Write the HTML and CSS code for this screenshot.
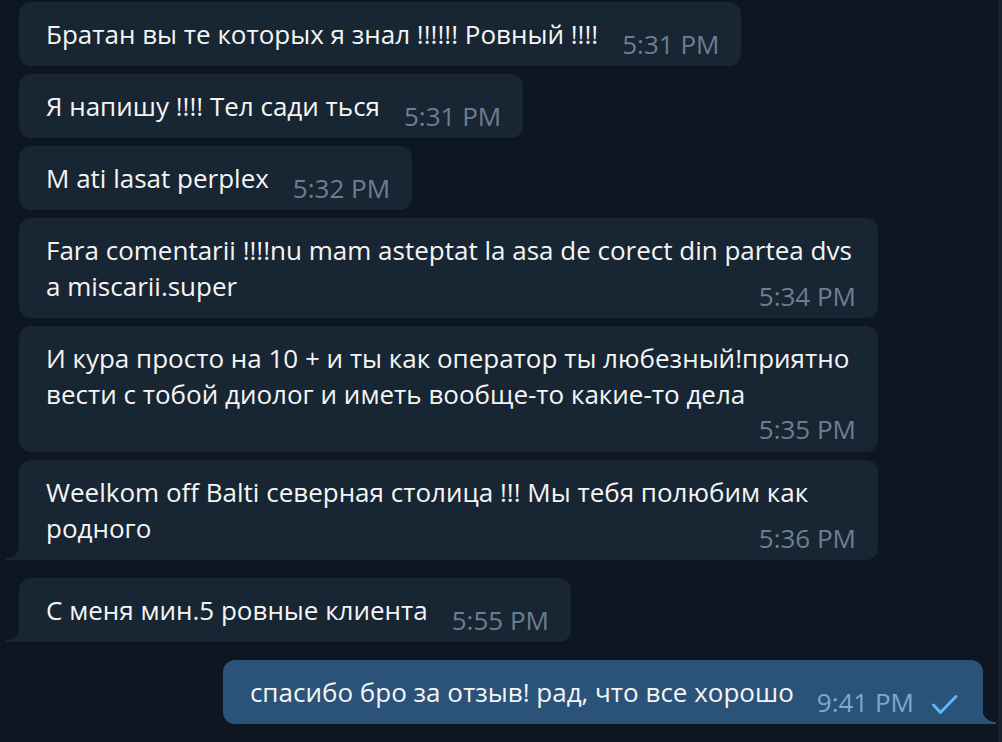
FILE: index.html
```html
<!DOCTYPE html>
<html lang="ru">

<head>
  <meta charset="UTF-8" />
  <meta name="viewport" content="width=device-width, initial-scale=1.0" />
  <title>Chat</title>
  <link rel="stylesheet" href="styles.css">
</head>

<body>
  <div class="window">
    <div class="chat">
      <div class="msg in">
        <div class="bubble">
          <p class="text">Братан вы те которых я знал !!!!!! Ровный !!!!<span class="time">5:31 PM</span></p>
        </div>
      </div>
      <div class="msg in">
        <div class="bubble">
          <p class="text">Я напишу !!!! Тел сади ться<span class="time">5:31 PM</span></p>
        </div>
      </div>
      <div class="msg in">
        <div class="bubble">
          <p class="text">M ati lasat perplex<span class="time">5:32 PM</span></p>
        </div>
      </div>
      <div class="msg in">
        <div class="bubble">
          <p class="text">Fara comentarii !!!!nu mam asteptat la asa de corect din partea dvs a miscarii.super<span class="time">5:34 PM</span></p>
        </div>
      </div>
      <div class="msg in">
        <div class="bubble stacked">
          <p class="text">И кура просто на 10 + и ты как оператор ты любезный!приятно вести с тобой диолог и иметь вообще-то какие-то дела<span class="time">5:35 PM</span></p>
        </div>
      </div>
      <div class="msg in last">
        <div class="bubble">
          <p class="text">Weelkom off Balti северная столица !!! Мы тебя полюбим как родного<span class="time">5:36 PM</span></p>
        </div>
      </div>
      <div class="msg in last">
        <div class="bubble">
          <p class="text">С меня мин.5 ровные клиента<span class="time">5:55 PM</span></p>
        </div>
      </div>
      <div class="msg out last">
        <div class="bubble">
          <p class="text">спасибо бро за отзыв! рад, что все хорошо<span class="time">9:41 PM<svg class="check" width="27" height="21" viewBox="0 0 27 21"><path d="M2.5 11 L9.5 18.5 L25 2.5" fill="none" stroke="currentColor" stroke-width="2.9" stroke-linecap="round" stroke-linejoin="round"/></svg></span></p>
        </div>
      </div>
    </div>
    <div class="scrollbar"></div>
  </div>
</body>

</html>
```

FILE: styles.css
```css
body {
  margin: 0;
  background-color: #0e1621;
  font-family: "Open Sans", "Noto Sans", sans-serif;
  color: #f5f5f5;
}

.window {
  display: flex;
  height: 742px;
  overflow: hidden;
}

.chat {
  flex: 1;
  display: flex;
  flex-direction: column;
  gap: 8px;
  padding: 2px 15px 0 19px;
}

.scrollbar {
  width: 4px;
  background-color: #18212c;
}

.msg {
  display: flex;
}

.msg.out {
  justify-content: flex-end;
}

/* группа сообщений отделяется большим отступом */
.msg.last {
  margin-bottom: 10px;
}

.bubble {
  position: relative;
  max-width: 810px;
  padding: 14px 22px 14px 27px;
  border-radius: 12px;
  background-color: #182533;
}

.out .bubble {
  padding-right: 25px;
  background-color: #2b5278;
}

.text {
  display: flow-root;
  margin: 0;
  font-size: 26px;
  line-height: 36px;
}

.time {
  float: right;
  position: relative;
  top: 5px;
  margin: 10px 0 -10px 24px;
  font-size: 26px;
  line-height: 26px;
  color: #6d7f8f;
}

.stacked .time {
  top: -6px;
}

.out .time {
  margin-left: 23px;
  color: #7da8d3;
}

.check {
  margin-left: 17px;
  color: #5fb7f7;
  vertical-align: -3px;
}

/* хвостик пузыря */
.in.last .bubble {
  border-bottom-left-radius: 0;
}

.out.last .bubble {
  border-bottom-right-radius: 0;
}

.last .bubble::before {
  content: "";
  position: absolute;
  bottom: 0;
  width: 13px;
  height: 16px;
}

.in.last .bubble::before {
  left: -13px;
  background: radial-gradient(circle at 0 0, transparent 14px, #182533 14.5px);
}

.out.last .bubble::before {
  right: -13px;
  background: radial-gradient(circle at 100% 0, transparent 14px, #2b5278 14.5px);
}
```
